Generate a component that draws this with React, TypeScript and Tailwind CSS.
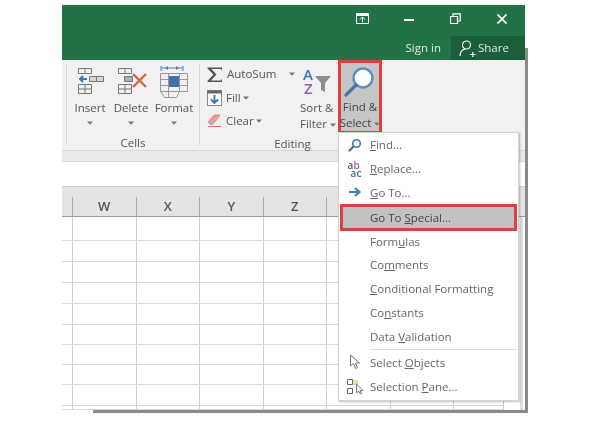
import React from 'react';

const Caret = ({ className = '' }: { className?: string }) => (
    <svg className={`inline-block ${className}`} width="6" height="4" viewBox="0 0 6 4">
        <path d="M0 0.5h6L3 3.8z" fill="#777" />
    </svg>
);

const InsertIcon = () => (
    <svg width="29" height="27" viewBox="0 0 29 27" fill="none">
        <g stroke="#777" strokeWidth="1">
            <path d="M2.5 0.5h13v5h-13zM9 0.5v5" />
            <path d="M2.5 16.5h13v9h-13zM2.5 21h13M9 16.5v9" />
            <path d="M13.5 8.5h14v5h-14zM20.5 8.5v5" fill="#d5d5d5" />
        </g>
        <path d="M11 11H4M7 8l-3 3 3 3" stroke="#3f78b0" strokeWidth="2" />
    </svg>
);

const DeleteIcon = () => (
    <svg width="31" height="27" viewBox="0 0 31 27" fill="none">
        <g stroke="#777" strokeWidth="1">
            <path d="M1.5 0.5h13v5h-13zM8 0.5v5" />
            <path d="M1.5 16.5h13v9h-13zM1.5 21h13M8 16.5v9" />
            <path d="M7.5 8.5h8v5h-8z" fill="#9fb4c8" />
        </g>
        <path d="M16 6l13 13M29 6L16 19" stroke="#d9653f" strokeWidth="2.4" />
    </svg>
);

const FormatIcon = () => (
    <svg width="29" height="33" viewBox="0 0 29 33" fill="none">
        <path d="M1 3h22M1 1v5M23 1v5" stroke="#4a7fb5" />
        <path d="M5 3l3-2v4zM19 3l-3-2v4z" fill="#4a7fb5" />
        <g stroke="#999" strokeWidth="1">
            <path d="M0.5 8.5h27v18h-27zM0.5 14.5h27M0.5 20.5h27M8.5 8.5v24M19.5 8.5v18" />
            <path d="M0.5 26.5l4 6h12l3-6" />
        </g>
        <rect x="9" y="11" width="10" height="11" fill="#3f72ad" />
    </svg>
);

const SigmaIcon = () => (
    <svg width="16" height="15" viewBox="0 0 16 15">
        <path d="M0.5 0.5h14.500v3.500l-1-2H4.500l5 5.500-5.500 6h10l1-2v3.500H0.500v-1l6-6.500-6-6z" fill="#555" />
    </svg>
);

const FillIcon = () => (
    <svg width="15" height="16" viewBox="0 0 15 16" fill="none">
        <rect x="0.5" y="0.5" width="14" height="15" stroke="#888" fill="#fff" />
        <rect x="0.5" y="0.5" width="14" height="3" fill="#666" />
        <path d="M7.5 5v8M4 9.5l3.5 3.5L11 9.5" stroke="#2f74b5" strokeWidth="1.8" />
    </svg>
);

const EraserIcon = () => (
    <svg width="15" height="14" viewBox="0 0 15 14">
        <path d="M1 8l6-7h6L8 8l-2.500 2.500H3z" fill="#ea9ca0" stroke="#d66a70" strokeWidth="0.6" />
        <path d="M1 12.5h13" stroke="#d66a70" />
    </svg>
);

const SortIcon = () => (
    <svg className="overflow-visible" width="30" height="28" viewBox="0 0 30 28">
        <text x="1" y="13" fontSize="15" fontWeight="600" fontFamily="'Open Sans', sans-serif" fill="#3f78b8">A</text>
        <text x="2" y="27" fontSize="15" fontWeight="600" fontFamily="'Open Sans', sans-serif" fill="#8a63a8">Z</text>
        <path d="M13 9h16l-6 7v9l-4-2v-7z" fill="#8d8d8d" />
    </svg>
);

const BigLens = () => (
    <svg width="32" height="32" viewBox="0 0 32 32" fill="none">
        <circle cx="20" cy="12" r="9.5" fill="#fbfdff" stroke="#5b8fc4" strokeWidth="2.4" />
        <path d="M13 19L3 29" stroke="#4a78ab" strokeWidth="3.4" strokeLinecap="round" />
    </svg>
);

const MenuIcon = ({ name }: { name: string }) => {
    if (name === 'find')
        return (
            <svg width="14" height="14" viewBox="0 0 14 14" fill="none">
                <circle cx="8.5" cy="5.5" r="3.8" stroke="#3f78b0" strokeWidth="1.6" fill="#fff" />
                <path d="M5.5 8.5L1.5 12.5" stroke="#3f6f9f" strokeWidth="2.2" strokeLinecap="round" />
            </svg>
        );
    if (name === 'replace')
        return (
            <div className="flex flex-col text-[10px] leading-[8px] font-semibold text-[#555]">
                <span>
                    a<span className="text-[#8a63a8]">b</span>
                </span>
                <span className="ml-[3px] text-[#4a6f96]">ac</span>
            </div>
        );
    if (name === 'goto')
        return (
            <svg width="14" height="12" viewBox="0 0 14 12" fill="none">
                <path d="M1 6h10M7 2l4.500 4L7 10" stroke="#4a7fb5" strokeWidth="2.2" />
            </svg>
        );
    if (name === 'objects')
        return (
            <svg width="12" height="16" viewBox="0 0 12 16" fill="#fff">
                <path d="M1.500 1v11l3-2.500 2 5 2-1-2-4.500h4z" stroke="#777" />
            </svg>
        );
    return (
        <svg width="17" height="17" viewBox="0 0 17 17" fill="none">
            <path d="M1.500 1.500h5v5h-5zM1.500 10.500h5v5h-5z" stroke="#666" />
            <rect x="7" y="2" width="5" height="5" fill="#ecdca6" />
            <path d="M10.500 6v9l2-2 2 3 1-.5-1.500-3h3z" fill="#fff" stroke="#777" />
        </svg>
    );
};

const RibbonButton = ({ icon, label, className }: { icon: React.ReactNode; label: string; className: string }) => (
    <div className={`flex flex-col items-center shrink-0 ${className}`}>
        <div className="h-[34px] shrink-0 flex items-start justify-center">{icon}</div>
        <div className="h-[16px] shrink-0 leading-[16px]">{label}</div>
        <Caret className="mt-[5px] shrink-0" />
    </div>
);

const menuItems = [
    { icon: 'find', before: '', key: 'F', after: 'ind...' },
    { icon: 'replace', before: '', key: 'R', after: 'eplace...' },
    { icon: 'goto', before: '', key: 'G', after: 'o To...' },
    { icon: '', before: 'Go To ', key: 'S', after: 'pecial...', selected: true },
    { icon: '', before: 'Form', key: 'u', after: 'las' },
    { icon: '', before: 'Co', key: 'm', after: 'ments' },
    { icon: '', before: '', key: 'C', after: 'onditional Formatting' },
    { icon: '', before: 'Co', key: 'n', after: 'stants' },
    { icon: '', before: 'Data ', key: 'V', after: 'alidation' },
];

const columns = ['W', 'X', 'Y', 'Z', '', '', ''];
const rowHeights = ['h-[24px]', 'h-[21px]', 'h-[21px]', 'h-[21px]', 'h-[21px]', 'h-[20px]', 'h-[20px]', 'h-[20px]', 'h-[21px]', 'h-[4px]'];

const App: React.FC = () => {
    return (
        <div className="w-[600px] h-[422px] bg-white overflow-hidden pt-[5px] pl-[62px] font-['Open_Sans',sans-serif] text-[11.5px] text-[#555] blur-[0.4px]">
            <div className="relative w-[463px] h-[405px] bg-white">
                {/* Window shadow */}
                <div className="absolute left-[31px] top-[43px] -right-[3px] -bottom-[3px] bg-[#8a8a8a]" />

                <div className="relative h-full flex flex-col">
                    {/* Title bar */}
                    <div className="h-[55px] shrink-0 bg-[#217346] flex flex-col items-end">
                        <div className="h-[27px] mb-[4px] flex items-center text-white">
                            <svg className="mr-[35px]" width="13" height="11" viewBox="0 0 13 11" fill="none">
                                <path d="M0.5 0.5h12v10h-12z" stroke="#fff" />
                                <path d="M0.5 2h12" stroke="#fff" strokeWidth="2" />
                                <path d="M6.5 9V4.5M4 6.5L6.500 4 9 6.500" stroke="#fff" />
                            </svg>
                            <div className="w-[10px] h-[2px] bg-white mr-[36px] mt-[3px]" />
                            <svg className="mr-[36px]" width="11" height="11" viewBox="0 0 11 11" fill="none">
                                <path d="M0.5 3.5h7v7h-7zM3 3V0.8h7.200V8H8" stroke="#fff" strokeWidth="1.2" />
                            </svg>
                            <svg className="mr-[18px]" width="10" height="10" viewBox="0 0 10 10">
                                <path d="M0.5 0.5l9 9M9.500 0.500l-9 9" stroke="#fff" strokeWidth="1.8" />
                            </svg>
                        </div>
                        <div className="h-[24px] flex items-stretch text-[#dcebe3]">
                            <div className="flex items-center mr-[10px]">Sign in</div>
                            <div className="w-[74px] bg-[#1b5e3a] flex items-center pl-[8px] gap-[2px]">
                                <svg width="17" height="17" viewBox="0 0 17 17" fill="none">
                                    <circle cx="7.5" cy="5" r="4" stroke="#fff" strokeWidth="1.2" />
                                    <path d="M1 16c0-4 2.500-6.500 5.500-7M11 14.500h5.500M13.750 12v5" stroke="#fff" strokeWidth="1.2" />
                                </svg>
                                Share
                            </div>
                        </div>
                    </div>

                    {/* Ribbon */}
                    <div className="h-[90px] shrink-0 bg-[#f1f1f1] flex">
                        <div className="ml-[4px] mt-[4px] h-[81px] w-[134px] border-x border-[#d6d6d6] flex flex-col">
                            <div className="h-[64px] shrink-0 flex pt-[2px]">
                                <RibbonButton className="w-[46px]" icon={<div className="mt-[2px] ml-[1px]"><InsertIcon /></div>} label="Insert" />
                                <RibbonButton className="w-[36px]" icon={<div className="mt-[2px] ml-[3px]"><DeleteIcon /></div>} label="Delete" />
                                <RibbonButton className="w-[50px]" icon={<div className="-mt-[1px]"><FormatIcon /></div>} label="Format" />
                            </div>
                            <div className="text-center mt-[6px]">Cells</div>
                        </div>
                        <div className="relative w-[138px] pl-[7px] pt-[4px]">
                            <div className="flex items-center gap-[4px] h-[20px]">
                                <SigmaIcon />
                                <span>AutoSum</span>
                                <Caret className="ml-[9px]" />
                            </div>
                            <div className="flex items-center gap-[4px] h-[23px] mt-[2px]">
                                <FillIcon />
                                <span>Fill</span>
                                <Caret className="-ml-[2px]" />
                            </div>
                            <div className="flex items-center gap-[4px] h-[23px]">
                                <EraserIcon />
                                <span>Clear</span>
                                <Caret className="-ml-[2px]" />
                            </div>
                            <div className="text-center mt-[3px] pl-[40px]">Editing</div>
                            {/* Sort & Filter sits in the tall right column of the group */}
                            <div className="absolute left-[100px] top-[7px] flex flex-col items-start leading-[16px]">
                                <div className="h-[33px] pl-[2px]">
                                    <SortIcon />
                                </div>
                                <div>Sort &amp;</div>
                                <div className="whitespace-nowrap">
                                    Filter <Caret className="align-middle" />
                                </div>
                            </div>
                        </div>
                        <div className="w-[44px] h-[74px] border-[3px] border-[#d9423f] bg-[#c6c6c6] flex flex-col items-center leading-[16px] text-[#444]">
                            <div className="h-[38px] pt-[3px] pr-[3px]">
                                <BigLens />
                            </div>
                            <div className="whitespace-nowrap">Find &amp;</div>
                            <div className="whitespace-nowrap">
                                Select <Caret className="align-middle" />
                            </div>
                        </div>
                    </div>

                    {/* Band and formula bar */}
                    <div className="h-[12px] shrink-0 bg-[#e9e9e9] border-y border-[#d8d8d8]" />
                    <div className="h-[25px] shrink-0 bg-white border-b border-[#d0d0d0]" />

                    {/* Column headers */}
                    <div className="h-[30px] shrink-0 bg-[#e4e4e4] border-b border-[#9a9a9a] flex pl-[10px] pt-[10px] overflow-hidden">
                        {columns.map((c, i) => (
                            <div key={i} className="w-[63.5px] h-[19px] shrink-0 border-l border-[#a9a9a9] text-center text-[13px] leading-[19px] font-semibold text-[#555]">
                                {c}
                            </div>
                        ))}
                    </div>

                    {/* Grid */}
                    <div className="flex-1 flex bg-white overflow-hidden">
                        <div className="flex-1 overflow-hidden">
                            {rowHeights.map((h, i) => (
                                <div key={i} className={`${h} flex border-b border-[#d9d9d9] pl-[10px]`}>
                                    {columns.map((_, j) => (
                                        <div key={j} className="w-[63.5px] shrink-0 border-l border-[#cfcfcf]" />
                                    ))}
                                </div>
                            ))}
                        </div>
                        {/* Scroll bar strip at the right edge */}
                        <div className="w-[22px] bg-white border-l border-[#c9c9c9] flex justify-end pr-[2px]">
                            <div className="w-[3px] bg-[#dddddd]" />
                        </div>
                    </div>
                </div>

                {/* Find & Select menu */}
                <div className="absolute left-[276px] top-[127px] w-[181px] h-[269px] bg-white border border-[#d4d4d4] shadow-[1px_1px_2px_rgba(0,0,0,0.25)] text-[#666]">
                    {menuItems.map((item, i) =>
                        item.selected ? (
                            <div key={i} className="h-[27px] -mb-[2px] mx-[1px] border-[3px] border-[#d9423f] bg-[#c2c2c2] flex items-center pl-[27px] text-[#444]">
                                <span>
                                    {item.before}
                                    <span className="underline">{item.key}</span>
                                    {item.after}
                                </span>
                            </div>
                        ) : (
                            <div key={i} className="h-[23.8px] flex items-center">
                                <div className="w-[31px] flex justify-center">{item.icon && <MenuIcon name={item.icon} />}</div>
                                <span>
                                    {item.before}
                                    <span className="underline">{item.key}</span>
                                    {item.after}
                                </span>
                            </div>
                        )
                    )}
                    <div className="ml-[31px] mt-[1px] border-t border-[#dddddd]" />
                    <div className="h-[24px] flex items-center">
                        <div className="w-[31px] flex justify-center">
                            <MenuIcon name="objects" />
                        </div>
                        <span>
                            Select <span className="underline">O</span>bjects
                        </span>
                    </div>
                    <div className="h-[24px] flex items-center">
                        <div className="w-[31px] flex justify-center">
                            <MenuIcon name="pane" />
                        </div>
                        <span>
                            Selection <span className="underline">P</span>ane...
                        </span>
                    </div>
                </div>
            </div>
        </div>
    );
};

export default App;
